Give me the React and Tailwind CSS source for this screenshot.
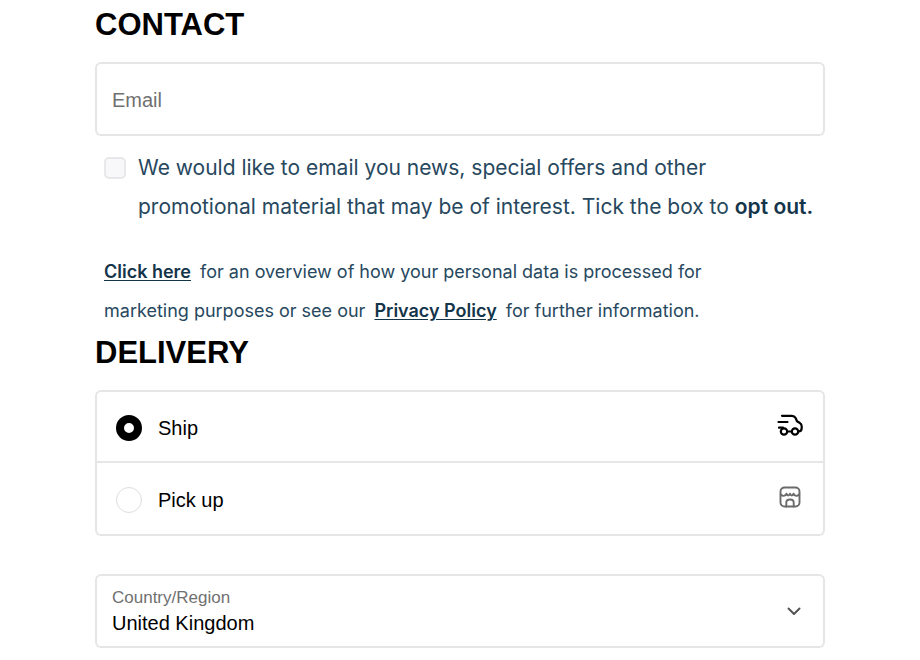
import { useState } from "react";

const countries = ["United Kingdom", "Ireland", "France", "Germany"];

function TruckIcon() {
  return (
    <svg width="26" height="22" viewBox="0 0 26 22" fill="none" stroke="black" strokeWidth="2.200" strokeLinecap="round" strokeLinejoin="round" aria-hidden="true">
      <path d="M5 1.800h10c1.800 0 2.800.7 3.600 2.200L20 7.300l2.500 1.500c1.500.9 2.200 1.900 2.200 3.400v1.800c0 2.200-1 3.500-3.200 3.500" />
      <path d="M1.500 8h9M2 13.700h4M10.500 17.500h4" />
      <circle cx="7" cy="17.500" r="3.200" />
      <circle cx="18" cy="17.500" r="3.200" />
    </svg>
  );
}

function StoreIcon() {
  return (
    <svg width="22" height="22" viewBox="0 0 22 22" fill="none" stroke="#6b6b6b" strokeWidth="1.900" strokeLinecap="round" strokeLinejoin="round" aria-hidden="true">
      <rect x="1.500" y="1.500" width="19" height="19" rx="4" />
      <path d="M1.800 8.500c1.800 1.900 4.600 1.900 5.700-.8 1.200 2.300 2.400 2.300 3.500 0 1.100 2.300 2.300 2.300 3.500 0 1.100 2.700 3.900 2.700 5.700.8" />
      <path d="M7.300 20.500v-4c0-1.900 1.400-3 3.700-3s3.700 1.100 3.700 3v4" />
    </svg>
  );
}

function DeliveryOption({ id, label, icon, checked, onChange }) {
  return (
    <label htmlFor={id} className="flex h-[71px] cursor-pointer items-center gap-4 px-[19px] pt-[2px]">
      <input
        id={id}
        type="radio"
        name="delivery"
        checked={checked}
        onChange={onChange}
        className="size-[26px] appearance-none rounded-full border border-[#dedede] bg-white checked:border-8 checked:border-black"
      />
      <span className="flex-1">{label}</span>
      <span className="mb-[6px] flex w-7 justify-center">{icon}</span>
    </label>
  );
}

export default function App() {
  const [email, setEmail] = useState("");
  const [optOut, setOptOut] = useState(false);
  const [delivery, setDelivery] = useState("ship");
  const [country, setCountry] = useState("United Kingdom");

  return (
    <main className="bg-white px-[95px] pt-[9px] pb-3 font-['Liberation_Sans',sans-serif] text-xl text-black">
      <h2 className="mb-[21px] text-[31px] leading-8 font-bold">CONTACT</h2>
      <input
        type="email"
        aria-label="Email"
        placeholder="Email"
        value={email}
        onChange={(e) => setEmail(e.target.value)}
        className="block h-[74px] w-full rounded-md border-2 border-[#e6e6e6] px-[15px] pt-[2px] placeholder:text-[#707070]"
      />

      <div className="px-[9px] pt-3 font-['Inter',sans-serif] text-[#27485e]">
        <label htmlFor="optout" className="flex gap-3 text-[21px] leading-[39px]">
          <input
            id="optout"
            type="checkbox"
            checked={optOut}
            onChange={(e) => setOptOut(e.target.checked)}
            className="mt-[9px] size-[22px] shrink-0 appearance-none rounded-[5px] border-2 border-[#e8e8ea] bg-[#f8f8fa] checked:bg-[#27485e]"
          />
          <span>
            We would like to email you news, special offers and other <br />
            promotional material that may be of interest. Tick the box to{" "}
            <strong className="font-semibold text-[#14344a]">opt out.</strong>
          </span>
        </label>
        <p className="mt-[26px] text-lg leading-[39px]">
          <a href="#data" className="mr-1 font-semibold text-[#14344a] underline underline-offset-2">Click here</a>
          {" "}for an overview of how your personal data is processed for <br />
          marketing purposes or see our{" "}
          <a href="#privacy" className="mx-1 font-semibold text-[#14344a] underline underline-offset-2">Privacy Policy</a>
          {" "}for further information.
        </p>
      </div>

      <h2 className="mt-[7px] mb-[21px] text-[31px] leading-8 font-bold">DELIVERY</h2>
      <div className="divide-y-2 divide-[#e6e6e6] rounded-md border-2 border-[#e6e6e6]">
        <DeliveryOption
          id="ship"
          label="Ship"
          icon={<TruckIcon />}
          checked={delivery === "ship"}
          onChange={() => setDelivery("ship")}
        />
        <DeliveryOption
          id="pickup"
          label="Pick up"
          icon={<StoreIcon />}
          checked={delivery === "pickup"}
          onChange={() => setDelivery("pickup")}
        />
      </div>

      {/* Floating label sits over the select */}
      <div className="relative mt-[38px]">
        <label htmlFor="country" className="absolute top-3 left-[17px] text-[17px] leading-6 text-[#707070]">
          Country/Region
        </label>
        <select
          id="country"
          value={country}
          onChange={(e) => setCountry(e.target.value)}
          className="block h-[74px] w-full appearance-none rounded-md border-2 border-[#e6e6e6] bg-transparent px-[15px] pt-6"
        >
          {countries.map((c) => (
            <option key={c}>{c}</option>
          ))}
        </select>
        <svg className="pointer-events-none absolute top-[33px] right-6" width="14" height="9" viewBox="0 0 14 9" fill="none" stroke="#555" strokeWidth="2" strokeLinecap="round" strokeLinejoin="round" aria-hidden="true">
          <path d="M1.500 1.500 7 7l5.500-5.500" />
        </svg>
      </div>
    </main>
  );
}
